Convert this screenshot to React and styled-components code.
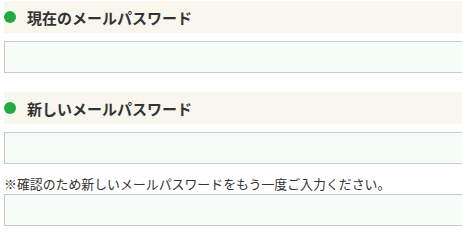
import React from "react";
import styled, { createGlobalStyle } from "styled-components";

const Global = createGlobalStyle`
  html, body { margin: 0; padding: 0; background: #fff; overflow: hidden; }
  body { font-family: "Noto Sans CJK JP", "Noto Sans", sans-serif; color: #333; }
`;

const Form = styled.div`
  width: 480px;
  padding: 1px 0 0 4px;
  display: flex;
  flex-direction: column;
`;

const Section = styled.section`
  display: flex;
  flex-direction: column;
  margin-top: ${(p) => (p.$first ? "0" : "19px")};
`;

const Heading = styled.h3`
  margin: 0 0 8px;
  height: 32px;
  background: #f8f7ee;
  display: flex;
  align-items: center;
  font-size: 15px;
  font-weight: 700;
  color: #333;
  line-height: 1;
`;

const DotSvg = styled.svg`
  display: block;
  width: 12px;
  height: 12px;
  flex: 0 0 12px;
  margin: -1px 11px 0 0;
`;

const Dot = () => (
  <DotSvg viewBox="0 0 12 12" aria-hidden="true">
    <circle cx="6" cy="6" r="6" fill="#22aa44" />
  </DotSvg>
);

const Input = styled.input`
  box-sizing: border-box;
  height: 32px;
  width: 100%;
  margin: 0;
  border: 1px solid #c9c9c9;
  background: #f6fcf8;
  outline: none;
  padding: 0 8px;
`;

const Note = styled.p`
  margin: 0;
  padding-top: 10px;
  line-height: 20px;
  font-size: 12.9px;
  color: #333;
  white-space: nowrap;
`;

export default function App() {
  return (
    <>
      <Global />
      <Form>
        <Section $first>
          <Heading>
            <Dot />
            現在のメールパスワード
          </Heading>
          <Input type="password" />
        </Section>
        <Section>
          <Heading>
            <Dot />
            新しいメールパスワード
          </Heading>
          <Input type="password" />
          <Note>※確認のため新しいメールパスワードをもう一度ご入力ください。</Note>
          <Input type="password" />
        </Section>
      </Form>
    </>
  );
}
